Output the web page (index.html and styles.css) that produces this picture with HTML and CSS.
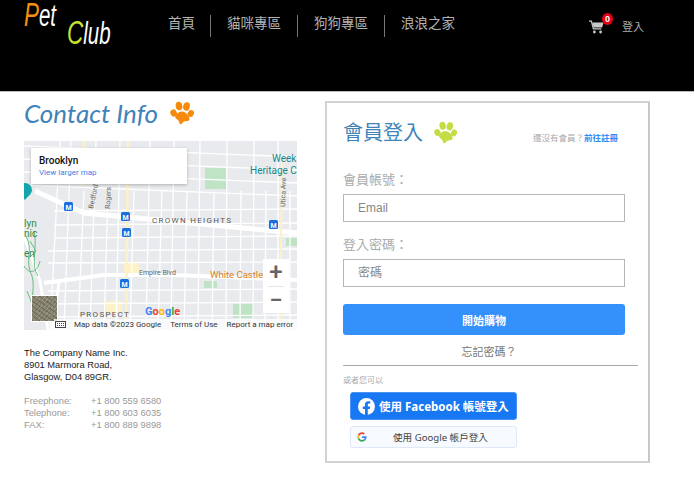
FILE: index.html
```html
<!DOCTYPE html>
<html lang="zh-Hant">
<head>
<meta charset="utf-8">
<title>Pet Club</title>
<link rel="stylesheet" href="styles.css">
</head>
<body>
<header class="top">
  <div class="logo">
    <span class="logo-pet"><b>P</b>et</span>
    <span class="logo-club"><b>C</b>lub</span>
  </div>
  <nav class="nav">
    <a class="nav-item">首頁</a>
    <a class="nav-item">貓咪專區</a>
    <a class="nav-item">狗狗專區</a>
    <a class="nav-item last">浪浪之家</a>
  </nav>
  <div class="user">
    <span class="cart">
      <svg width="15" height="14" viewBox="0 0 15 14"><path d="M0 1.2h2.4l2 7.6h8" fill="none" stroke="#c9c9c9" stroke-width="1.3"/><path d="M3.4 2.6H14.600l-1.500 4.800H4.600z" fill="#c9c9c9"/><circle cx="5.400" cy="12" r="1.400" fill="#c9c9c9"/><circle cx="11.600" cy="12" r="1.400" fill="#c9c9c9"/></svg>
      <span class="badge">0</span>
    </span>
    <a class="login-link">登入</a>
  </div>
</header>

<main class="page">
  <section class="contact">
    <h2 class="contact-title">Contact Info
      <svg class="paw-lg" width="24" height="24" viewBox="0 0 24 24"><g fill="#f58a0b"><ellipse cx="3.600" cy="12" rx="3.200" ry="3.600" transform="rotate(-25 3.600 12)"/><ellipse cx="9" cy="5" rx="3.300" ry="4.300" transform="rotate(-10 9 5)"/><ellipse cx="16.500" cy="5.500" rx="3.300" ry="4.300" transform="rotate(12 16.500 5.500)"/><ellipse cx="20.800" cy="12.500" rx="3" ry="3.600" transform="rotate(25 20.800 12.500)"/><path d="M12 10.500c3.500 0 7.500 4.500 7.500 7.500 0 2.600-3.500 1.800-5.500 2.600-1.500.6-2 3-3.500 2.700-1.500-.3-1-3-2.500-4.300C6 17.500 4.500 16.500 5.500 14.500c1-2 4-4 6.500-4z"/></g></svg>
    </h2>
    <div class="map">
      <svg class="map-art" width="273" height="189" viewBox="0 0 273 189">
        <rect width="273" height="189" fill="#e8eaed"/>
        <path d="M181 27h21v21h-21zM209 163h21v14h-21zM180 140h13v7h-13zM130 37h7v5h-7zM262 97h11v8h-11z" fill="#bfe3c5"/>
        <path d="M100 122l13-2 6 14-19 2zM82 160h16v12H82z" fill="#fdf1c7"/>
        <g fill="none" stroke="#fff" stroke-width="1.300">
          <path d="M0 5L273 16M0 18L273 29M0 31L273 42M0 44L273 55M30 70L273 68M30 84L273 82M30 97L273 95M24 110L273 108M24 122L273 121M24 150L273 148M24 163L273 161M24 176L273 174"/>
          <path d="M47 0L40 189M72 0L66 189M96 0L92 189M126 0L122 189M150 0L147 189M176 0L174 189M203 0L202 189M230 0L229 189M254 0L254 189M36 0L26 189M60 50L54 189M84 50L80 189M110 50L106 189M138 50L134 189M163 50L160 189M190 50L188 189M217 50L216 189M242 50L241 189M266 50L266 189"/>
        </g>
        <g fill="none" stroke-linecap="butt">
          <path d="M11 50L60 72 273 92" stroke="#fff" stroke-width="5"/>
          <path d="M20 142L80 134 150 134 273 139" stroke="#fff" stroke-width="4"/>
          <path d="M104 0L102 189" stroke="#fdf1c7" stroke-width="2.500"/>
          <path d="M60 0L58 45" stroke="#fdf1c7" stroke-width="2.500"/>
          <path d="M258 20L256 189" stroke="#fdf1c7" stroke-width="2"/>
          <path d="M0 95L16 140 24 189M35 142L28 189" stroke="#fff" stroke-width="3"/>
          <path d="M2 95C10 110 0 120 8 135C12 150 4 160 12 178M0 125C6 135 14 130 16 120M10 90C14 105 6 125 14 135M3 150L14 178M6 100L12 110L4 118" stroke="#5cb874" stroke-width=".9"/>
        </g>
        <g>
          <text x="128" y="82" class="lbl-hood">CROWN HEIGHTS</text>
          <text x="56" y="176" class="lbl-hood">PROSPECT</text>
          <text x="115" y="134" class="lbl-road">Empire Blvd</text>
          <text transform="translate(69 68) rotate(-78)" class="lbl-road">Bedford</text>
          <text transform="translate(86 68) rotate(-88)" class="lbl-road">Rogers</text>
          <text transform="translate(261 66) rotate(-88)" class="lbl-road">Utica Ave</text>
        </g>
        <text x="248" y="21" class="lbl-teal">Weeks</text>
        <text x="226" y="33" class="lbl-teal">Heritage Ce</text>
        <text x="186" y="137" class="lbl-orange">White Castle</text>
        <text x="0" y="86" class="lbl-park">lyn</text>
        <text x="0" y="96" class="lbl-park">nic</text>
        <text x="0" y="116" class="lbl-park">en</text>
        <path d="M-6 49a7 7 0 1 1 14 0c0 4-5 7-7 10-2-3-7-6-7-10z" fill="#12a5ab"/>
        <g class="metro">
          <rect x="40" y="61" width="9" height="9" rx="1.500"/><rect x="97" y="71" width="9" height="9" rx="1.500"/><rect x="98" y="87" width="9" height="9" rx="1.500"/><rect x="245" y="79" width="9" height="9" rx="1.500"/><rect x="96" y="138" width="9" height="9" rx="1.500"/>
        </g>
        <g class="metro-m">
          <text x="44.500" y="68.500">M</text><text x="101.500" y="78.500">M</text><text x="102.500" y="94.500">M</text><text x="249.500" y="86.500">M</text><text x="100.500" y="145.500">M</text>
        </g>
        <text x="121" y="174" class="lbl-google"><tspan fill="#4285f4">G</tspan><tspan fill="#ea4335">o</tspan><tspan fill="#fbbc05">o</tspan><tspan fill="#4285f4">g</tspan><tspan fill="#34a853">l</tspan><tspan fill="#ea4335">e</tspan></text>
      </svg>
      <div class="map-card">
        <strong class="map-card-title">Brooklyn</strong>
        <a class="map-card-link">View larger map</a>
      </div>
      <div class="map-thumb"></div>
      <div class="zoom-ctl"><span class="zoom-btn">+</span><span class="zoom-line"></span><span class="zoom-btn">−</span></div>
      <div class="map-foot">
        <svg class="kbd" width="11" height="7" viewBox="0 0 11 7"><rect x=".5" y=".5" width="10" height="6" fill="none" stroke="#444"/><path d="M2 2.500h7M2 4.500h7" stroke="#444" stroke-dasharray="1 1"/></svg>
        <span>Map data ©2023 Google</span><span>Terms of Use</span><span>Report a map error</span>
      </div>
    </div>
    <address class="addr">The Company Name Inc.<br>8901 Marmora Road,<br>Glasgow, D04 89GR.</address>
    <dl class="phones">
      <dt>Freephone:</dt><dd>+1 800 559 6580</dd>
      <dt>Telephone:</dt><dd>+1 800 603 6035</dd>
      <dt>FAX:</dt><dd>+1 800 889 9898</dd>
    </dl>
  </section>

  <section class="login">
    <div class="login-head">
      <h2 class="login-title">會員登入</h2>
      <svg class="paw-md" width="23" height="23" viewBox="0 0 24 24"><g fill="#c5dc45"><ellipse cx="3.600" cy="12" rx="3.200" ry="3.600" transform="rotate(-25 3.600 12)"/><ellipse cx="9" cy="5" rx="3.300" ry="4.300" transform="rotate(-10 9 5)"/><ellipse cx="16.500" cy="5.500" rx="3.300" ry="4.300" transform="rotate(12 16.500 5.500)"/><ellipse cx="20.800" cy="12.500" rx="3" ry="3.600" transform="rotate(25 20.800 12.500)"/><path d="M12 10.500c3.500 0 7.500 4.500 7.500 7.500 0 2.600-3.500 1.800-5.500 2.600-1.500.6-2 3-3.500 2.700-1.500-.3-1-3-2.500-4.300C6 17.500 4.500 16.500 5.500 14.500c1-2 4-4 6.500-4z"/></g></svg>
      <p class="signup">還沒有會員？<a class="signup-link">前往註冊</a></p>
    </div>
    <label class="field-label">會員帳號：</label>
    <div class="input">Email</div>
    <label class="field-label second">登入密碼：</label>
    <div class="input">密碼</div>
    <button class="submit">開始購物</button>
    <p class="forgot">忘記密碼？</p>
    <hr class="rule">
    <p class="or">或者您可以</p>
    <button class="fb">
      <svg width="17" height="17" viewBox="0 0 17 17"><circle cx="8.500" cy="8.500" r="8.500" fill="#fff"/><path d="M11.800 11l.4-2.500H9.800V6.900c0-.7.300-1.300 1.400-1.300h1.100V3.400s-1-.2-2-.2c-2 0-3.300 1.200-3.300 3.400v1.900H4.800V11H7v6h2.800v-6z" fill="#1877f2"/></svg>
      <span>使用 Facebook 帳號登入</span>
    </button>
    <button class="gg">
      <svg width="10" height="10" viewBox="0 0 48 48"><path fill="#ea4335" d="M24 9.500c3.900 0 6.600 1.700 8.100 3.100l5.900-5.800C34.400 3.500 29.700 1.500 24 1.500 15.300 1.500 7.800 6.500 4.100 13.800l6.900 5.400C12.800 13.600 17.900 9.500 24 9.500z"/><path fill="#4285f4" d="M46.100 24.500c0-1.800-.2-3.200-.5-4.600H24v8.400h12.700c-.3 2.100-1.600 5.200-4.700 7.300l6.700 5.200c4.500-4.100 7.400-10.200 7.400-16.300z"/><path fill="#fbbc05" d="M11 28.800c-.5-1.400-.7-3-.7-4.800s.3-3.300.7-4.800l-6.900-5.400C2.400 16.800 1.500 20.300 1.500 24s.9 7.200 2.600 10.200z"/><path fill="#34a853" d="M24 46.500c6.100 0 11.200-2 14.700-5.500L32 35.800c-1.800 1.300-4.300 2.100-8 2.100-6.100 0-11.200-4-13-9.500l-6.900 5.400C7.800 41.500 15.300 46.500 24 46.500z"/></svg>
      <span>使用 Google 帳戶登入</span>
    </button>
  </section>
</main>
</body>
</html>
```

FILE: styles.css
```css
* { box-sizing: border-box; }
html, body { margin: 0; padding: 0; }
body {
  width: 695px;
  height: 504px;
  overflow: hidden;
  background: #fff;
  font-family: "Liberation Sans", "Noto Sans CJK TC", sans-serif;
}
.top {
  width: 694px;
  height: 92px;
  background: #000;
  border-bottom: 1px solid #bbb;
  display: flex;
  align-items: flex-start;
  position: relative;
}
.logo {
  width: 168px;
  height: 50px;
  position: relative;
  font-family: "Liberation Sans", sans-serif;
  font-style: italic;
  color: #fff;
  font-size: 31px;
  line-height: 36px;
}
.logo b { font-weight: 400; font-size: 34px; }
.logo-pet, .logo-club { position: absolute; transform: scaleX(.66); transform-origin: left top; white-space: nowrap; }
.logo-pet { left: 24px; top: -4px; }
.logo-pet b { color: #f7900f; }
.logo-club { left: 67px; top: 14px; }
.logo-club b { color: #c5e234; }
.nav { display: flex; margin-top: 15px; }
.nav-item {
  padding: 0 16px;
  height: 22px;
  line-height: 18px;
  font-size: 13.500px;
  color: #b3b3b3;
  border-right: 1px solid #777;
}
.nav-item:first-child { padding-left: 0; padding-right: 15px; }
.nav-item.last { border-right: 0; }
.user {
  display: flex;
  align-items: center;
  position: absolute;
  left: 589px;
  top: 20px;
}
.cart { position: relative; display: block; height: 14px; width: 33px; }
.badge {
  position: absolute;
  left: 13px;
  top: -7px;
  width: 11px;
  height: 12px;
  border-radius: 50%;
  background: #e60012;
  color: #fff;
  font-size: 9px;
  font-weight: 700;
  line-height: 12px;
  text-align: center;
}
.login-link { font-size: 11px; color: #aaa; line-height: 14px; }

.page { display: flex; align-items: flex-start; padding-left: 24px; }
.contact { width: 273px; margin-right: 28px; }
.contact-title {
  margin: 4px 0 0;
  height: 45px;
  display: flex;
  align-items: flex-start;
  font-family: "Lato", sans-serif;
  font-style: italic;
  font-weight: 400;
  font-size: 26px;
  line-height: 34px;
  color: #3f83b8;
}
.paw-lg { margin: 5px 0 0 12px; }
.map {
  position: relative;
  width: 273px;
  height: 189px;
  overflow: hidden;
}
.map-art { display: block; }
.lbl-hood { font: 8px "Roboto", sans-serif; letter-spacing: 1.300px; fill: #555; }
.lbl-road { font: 7px "Roboto", sans-serif; fill: #666; }
.lbl-teal { font: 10px "Roboto", sans-serif; fill: #13878d; }
.lbl-orange { font: 9.500px "Roboto", sans-serif; fill: #d97f1d; }
.lbl-park { font: 10px "Roboto", sans-serif; fill: #2e8b4a; }
.lbl-google { font: 700 11px "Roboto", sans-serif; }
.metro { fill: #1a6fe0; }
.metro-m { font: 700 7px "Roboto", sans-serif; fill: #fff; text-anchor: middle; }
.map-card {
  position: absolute;
  left: 7px;
  top: 7px;
  width: 156px;
  height: 36px;
  padding: 7px 8px;
  background: #fff;
  box-shadow: 0 1px 3px rgba(0,0,0,.25);
  font-family: "Roboto", sans-serif;
}
.map-card-title { display: block; font-size: 10px; font-weight: 500; line-height: 12px; color: #111; }
.map-card-link { display: block; font-size: 8px; line-height: 11px; color: #3b82e6; }
.map-thumb {
  position: absolute;
  left: 7px;
  top: 154px;
  width: 27px;
  height: 27px;
  border: 1px solid #fff;
  background:
    repeating-linear-gradient(35deg, rgba(60,58,45,.35) 0 1px, transparent 1px 4px),
    repeating-linear-gradient(-50deg, rgba(190,185,165,.35) 0 1px, transparent 1px 3px),
    #84816f;
}
.zoom-ctl {
  position: absolute;
  left: 239px;
  top: 118px;
  width: 26px;
  height: 54px;
  background: #fff;
  display: flex;
  flex-direction: column;
  align-items: center;
}
.zoom-btn {
  height: 27px;
  font: 500 24px/26px "Roboto", sans-serif;
  color: #666;
}
.zoom-line { width: 16px; height: 1px; background: #e6e6e6; flex: none; }
.map-foot {
  position: absolute;
  left: 30px;
  right: 0;
  bottom: 0;
  height: 11px;
  display: flex;
  align-items: center;
  gap: 9px;
  padding-left: 1px;
  background: rgba(255,255,255,.75);
  font: 8px/11px "Roboto", sans-serif;
  color: #333;
  white-space: nowrap;
}
.kbd { flex: none; margin-right: -1px; }
.addr {
  margin-top: 17px;
  font-style: normal;
  font-size: 9.330px;
  line-height: 12px;
  color: #222;
}
.phones {
  margin: 12px 0 0;
  display: grid;
  grid-template-columns: 67px 1fr;
  font-size: 9.330px;
  line-height: 12px;
  color: #999;
}
.phones dd { margin: 0; }

.login {
  width: 325px;
  height: 362px;
  margin-top: 9px;
  padding: 0 16px;
  border: 2px solid #d2d2d2;
  border-right-color: #c8c8c8;
}
.login-head { display: flex; align-items: center; height: 59px; position: relative; }
.login-title { margin: 0 11px 0 0; font-size: 20px; font-weight: 400; color: #3f83b8; line-height: 28px; }
.signup {
  position: absolute;
  right: 14px;
  top: 29px;
  margin: 0;
  font-size: 8.500px;
  line-height: 12px;
  color: #aaa;
}
.signup-link { color: #2f8df5; font-weight: 700; }
.field-label {
  display: block;
  margin-top: 9px;
  font-size: 13px;
  line-height: 18px;
  color: #aaa;
}
.field-label.second { margin-top: 14px; }
.input {
  width: 282px;
  height: 28px;
  margin-top: 5px;
  padding-left: 14px;
  border: 1px solid #b5b5b5;
  font-size: 12px;
  line-height: 26px;
  color: #888;
}
.submit {
  display: block;
  width: 282px;
  height: 31px;
  margin-top: 17px;
  border: 0;
  border-radius: 3px;
  background: #3491fb;
  color: #fff;
  font-family: inherit;
  font-size: 11px;
  font-weight: 700;
}
.forgot {
  width: 282px;
  margin: 9px 0 0;
  padding-left: 10px;
  text-align: center;
  font-size: 11px;
  line-height: 16px;
  color: #777;
}
.rule { width: 295px; margin: 5px 0 0; border: 0; border-top: 1px solid #aaa; }
.or { margin: 9px 0 0; font-size: 8px; line-height: 12px; color: #aaa; }
.fb, .gg {
  display: flex;
  align-items: center;
  width: 167px;
  margin-left: 7px;
  padding: 0;
  font-family: "Noto Sans", "Noto Sans CJK TC", sans-serif;
}
.fb {
  height: 28px;
  margin-top: 5px;
  padding-left: 7px;
  gap: 4px;
  border: 1px solid #4a93f0;
  border-radius: 3px;
  background: #1877f2;
  color: #fff;
  font-size: 11.500px;
  font-weight: 700;
}
.gg {
  height: 22px;
  margin-top: 6px;
  padding-left: 6px;
  border: 1px solid #dfe8f8;
  border-radius: 3px;
  background: #f7faff;
  color: #444;
  font-size: 9.600px;
}
.gg span { margin-left: 26px; }
```
